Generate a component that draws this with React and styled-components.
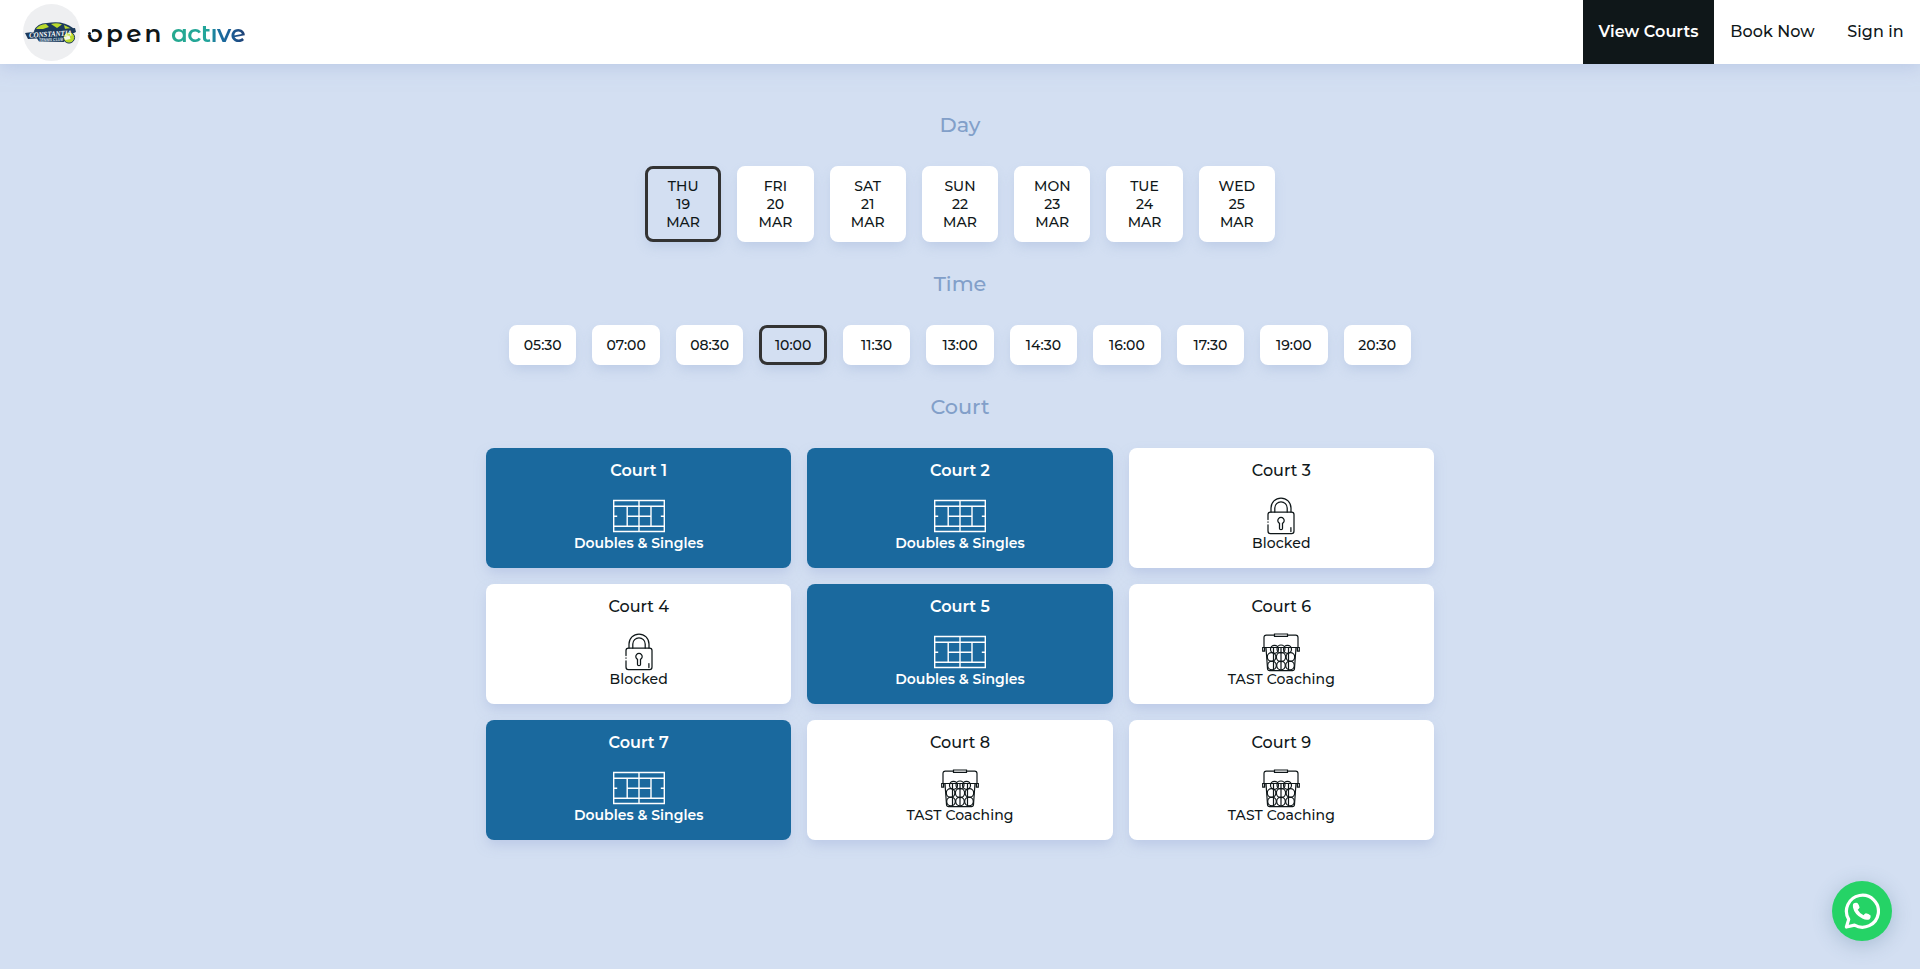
import React from "react";
import styled, { createGlobalStyle } from "styled-components";

const GlobalStyle = createGlobalStyle`
  * { box-sizing: border-box; }
  body {
    margin: 0;
    min-height: 100vh;
    background: #d3dff2;
    color: #0f1719;
    font-family: Montserrat, Inter, "Open Sans", sans-serif;
    font-weight: 500;
  }
`;

const Header = styled.header`
  height: 64px;
  background: #fff;
  display: flex;
  justify-content: space-between;
  box-shadow: 0 4px 16px rgba(168, 184, 220, 0.5);
`;

const Brand = styled.div`
  display: flex;
  align-items: center;
  padding-left: 23px;
`;

const Badge = styled.div`
  width: 57px;
  height: 57px;
  border-radius: 50%;
  background: #eeeff1;
  display: flex;
`;

const Wordmark = styled.div`
  display: flex;
  margin: 1px 0 0 7px;
  font-size: 24.6px;
  line-height: 30px;
  font-weight: 600;
  font-feature-settings: "ss01" 1;
`;

const Open = styled.span`
  position: relative;
  width: 84px;
  letter-spacing: 3.2px;
  color: #0f1719;
  &::before {
    content: "";
    position: absolute;
    left: 0;
    top: 11px;
    width: 5px;
    height: 6px;
    background: #fff;
  }
  &::after {
    content: "";
    position: absolute;
    left: 1px;
    top: 14px;
    width: 3px;
    height: 3px;
    border-radius: 50%;
    background: #0f1719;
  }
`;

const Active = styled.span`
  letter-spacing: -0.5px;
  padding-right: 2px;
  background: linear-gradient(90deg, #26a98f 0%, #22a59b 48%, #1a6f9f 62%, #1a5f98 78%, #213d70 100%);
  background-clip: text;
  color: transparent;
`;

const Nav = styled.nav`
  display: flex;
`;

const NavItem = styled.a`
  width: ${(p) => p.$width}px;
  padding-bottom: 1px;
  display: flex;
  align-items: center;
  justify-content: center;
  font-size: 16px;
  letter-spacing: 0.06px;
  font-weight: ${(p) => (p.$active ? 600 : 500)};
  background: ${(p) => (p.$active ? "#0f1719" : "transparent")};
  color: ${(p) => (p.$active ? "#fff" : "#0f1719")};
`;

const Main = styled.main`
  width: 948px;
  margin: 0 auto;
  padding-top: 44px;
`;

const Heading = styled.h2`
  margin: 0;
  height: 58px;
  line-height: 34px;
  font-size: 20.8px;
  font-weight: 500;
  text-align: center;
  color: #829fc9;
`;

const Options = styled.div`
  display: flex;
  gap: 16px;
  width: ${(p) => p.$width}px;
  margin: 0 auto 25px;
`;

const Option = styled.button`
  flex: 1 1 0;
  height: ${(p) => p.$height}px;
  padding: 0 0 1px;
  border: 3px solid ${(p) => (p.$selected ? "#333" : "#fff")};
  border-radius: 8px;
  background: ${(p) => (p.$selected ? "#d3dff2" : "#fff")};
  box-shadow: 0 6px 12px -2px rgba(160, 180, 215, 0.45);
  color: #0f1719;
  font: inherit;
  font-size: 14px;
  line-height: 18px;
  white-space: pre-line;
`;

const Courts = styled.div`
  display: grid;
  grid-template-columns: repeat(3, 1fr);
  gap: 16px;
`;

const Card = styled.article`
  height: 120px;
  padding-top: 13px;
  border-radius: 8px;
  display: flex;
  flex-direction: column;
  align-items: center;
  background: ${(p) => (p.$open ? "#1a699e" : "#fff")};
  color: ${(p) => (p.$open ? "#fff" : "#0f1719")};
  font-weight: ${(p) => (p.$open ? 600 : 500)};
  box-shadow: 0 6px 12px -1px rgba(165, 182, 220, 0.5);
  svg { display: block; }
`;

const CardTitle = styled.div`
  font-size: 16px;
  line-height: 20px;
`;

const IconSlot = styled.div`
  height: 53px;
  padding-top: 16px;
`;

const CardLabel = styled.div`
  font-size: 14px;
  line-height: 18px;
  letter-spacing: ${(p) => (p.$open ? 0 : 0.1)}px;
`;

const Chat = styled.a`
  position: fixed;
  right: 28px;
  bottom: 28px;
  width: 60px;
  height: 60px;
  border-radius: 50%;
  background: #25d366;
  box-shadow: 0 4px 20px rgba(70, 110, 140, 0.3);
  display: flex;
  align-items: center;
  justify-content: center;
`;

const ClubLogo = () => (
  <svg width="57" height="57" viewBox="0 0 57 57">
    <path d="M11 27 Q14 19 24 19 Q40 16 50 24 L52 28 L40 34 L12 32Z" fill="#1c3a5c" />
    <path d="M13 25 Q16 20.5 23 20 L26 23 L20 25Z M28 20 Q34 18.5 39 20.5 L34 24Z M41 21 L48 24.5 L42 25Z" fill="#b9d92c" />
    <path d="M2 29 L17 27 L52 24 L53 28 L46 31 L41 38 L16 37.5 L14 34.5 L5 35Z" fill="#1c3a5c" />
    <circle cx="46" cy="33.5" r="5.6" fill="#b9d92c" stroke="#1c3a5c" />
    <path d="M40.5 33l6-1.5 1 3.5-5 1Z" fill="#f3f6e8" />
    <text x="6" y="32.5" fontFamily="Liberation Serif, serif" fontSize="7.6" fontWeight="700" fontStyle="italic" fill="#fff" textLength="43" lengthAdjust="spacingAndGlyphs" transform="rotate(-3 28 30)">CONSTANTIA</text>
    <text x="16" y="37" fontFamily="Liberation Sans, sans-serif" fontSize="4.2" fontWeight="700" fontStyle="italic" fill="#dfe7ee" textLength="24" lengthAdjust="spacingAndGlyphs" transform="rotate(-2 28 37)">TENNIS CLUB</text>
  </svg>
);

const CourtIcon = () => (
  <svg width="52" height="38" viewBox="0 0 52 38" fill="none" stroke="#fff" strokeWidth="1.4">
    <path d="M.7 3.5H51.3v31H.7Z M.7 9.2H51.3M.7 29.2H51.3M26 3.5v31M14.2 9.2v20M38 9.2v20M14.2 19.2h23.8M.7 19.2H4.2M47.8 19.2H51.3" />
  </svg>
);

const LockIcon = () => (
  <svg width="38" height="38" viewBox="0 0 38 38" fill="none" stroke="#0f1719" strokeWidth="1.25" strokeLinecap="round">
    <path d="M9 15V11a10 10 0 0 1 20 0V15M12.8 15V11a6.2 6.2 0 0 1 12.4 0V15" />
    <path d="M6 22.5V17.4Q6 15 8.4 15H29.6Q32 15 32 17.4V33.9Q32 36.6 29.6 36.6H8.4Q6 36.6 6 33.9V27.8M6 24.9v.3M28.9 30.5v4" />
    <path d="M17.5 26.4a3.2 3.2 0 1 1 3 0v5q0 1.2-1.5 1.2t-1.5-1.2Z" />
  </svg>
);

const BasketIcon = () => (
  <svg width="38" height="40" viewBox="0 0 38 40" fill="none" stroke="#0f1719" strokeWidth="1.2">
    <path d="M2 14.5V4.5Q2 2.2 4.3 2.2H12.5M25.5 2.2H33.7Q36 2.2 36 4.5V14.5M12.5 1h13v2.4h-13Z" />
    <path d="M.7 14.5h1.9v3.6H.7ZM35.4 14.5h1.9v3.6h-1.9ZM2.6 14.5H35.4M4 14.5l1.5 21Q5.7 37.7 7.5 37.7h23q1.8 0 2-2.2l1.5-21" />
    <circle cx="12.5" cy="16.3" r="4" />
    <circle cx="19" cy="16" r="4" />
    <circle cx="25.5" cy="16.3" r="4" />
    <circle cx="9.6" cy="24" r="4.3" />
    <circle cx="19" cy="24" r="4.6" />
    <circle cx="28.4" cy="24" r="4.3" />
    <circle cx="10" cy="32.5" r="4.3" />
    <circle cx="19" cy="32.5" r="4.3" />
    <circle cx="28" cy="32.5" r="4.3" />
    <path d="M11.5 14.5v22M19 14.5v22M26.5 14.5v22" />
  </svg>
);

const WhatsAppIcon = () => (
  <svg width="36" height="36" viewBox="0 0 36 36">
    <path d="M2.4 34 L4.7 26.4 A16 16 0 1 1 10.5 32.1 Z" fill="none" stroke="#fff" strokeWidth="3.2" strokeLinejoin="round" />
    <path d="M9.2 10.8Q11 9.3 13.4 9.9Q15.4 12 15.6 14.6Q14.9 16 13.7 16.7Q15.6 20.3 19.6 22.3Q20.5 20.7 21.9 20.2Q24.6 20.6 26.6 22.6Q27 24.5 25.6 26.3Q22.5 27.6 18.3 25.6Q10.5 21.5 9 14.5Q8.7 12 9.2 10.8Z" fill="#fff" />
  </svg>
);

const days = [["THU", 19], ["FRI", 20], ["SAT", 21], ["SUN", 22], ["MON", 23], ["TUE", 24], ["WED", 25]];
const times = ["05:30", "07:00", "08:30", "10:00", "11:30", "13:00", "14:30", "16:00", "17:30", "19:00", "20:30"];
const kinds = {
  open: { label: "Doubles & Singles", Icon: CourtIcon },
  blocked: { label: "Blocked", Icon: LockIcon },
  coaching: { label: "TAST Coaching", Icon: BasketIcon },
};
const courts = ["open", "open", "blocked", "blocked", "open", "coaching", "open", "coaching", "coaching"];

export default function App() {
  return (
    <>
      <GlobalStyle />
      <Header>
        <Brand>
          <Badge><ClubLogo /></Badge>
          <Wordmark><Open>open</Open><Active>actıve</Active></Wordmark>
        </Brand>
        <Nav>
          <NavItem $width={131} $active>View Courts</NavItem>
          <NavItem $width={117}>Book Now</NavItem>
          <NavItem $width={89}>Sign in</NavItem>
        </Nav>
      </Header>
      <Main>
        <Heading>Day</Heading>
        <Options $width={630}>
          {days.map(([name, date]) => (
            <Option key={date} $height={76} $selected={date === 19}>{`${name}\n${date}\nMAR`}</Option>
          ))}
        </Options>
        <Heading>Time</Heading>
        <Options $width={902}>
          {times.map((t) => (
            <Option key={t} $height={40} $selected={t === "10:00"}>{t}</Option>
          ))}
        </Options>
        <Heading>Court</Heading>
        <Courts>
          {courts.map((kind, i) => {
            const { label, Icon } = kinds[kind];
            return (
              <Card key={i} $open={kind === "open"}>
                <CardTitle>Court {i + 1}</CardTitle>
                <IconSlot><Icon /></IconSlot>
                <CardLabel $open={kind === "open"}>{label}</CardLabel>
              </Card>
            );
          })}
        </Courts>
      </Main>
      <Chat aria-label="WhatsApp"><WhatsAppIcon /></Chat>
    </>
  );
}
